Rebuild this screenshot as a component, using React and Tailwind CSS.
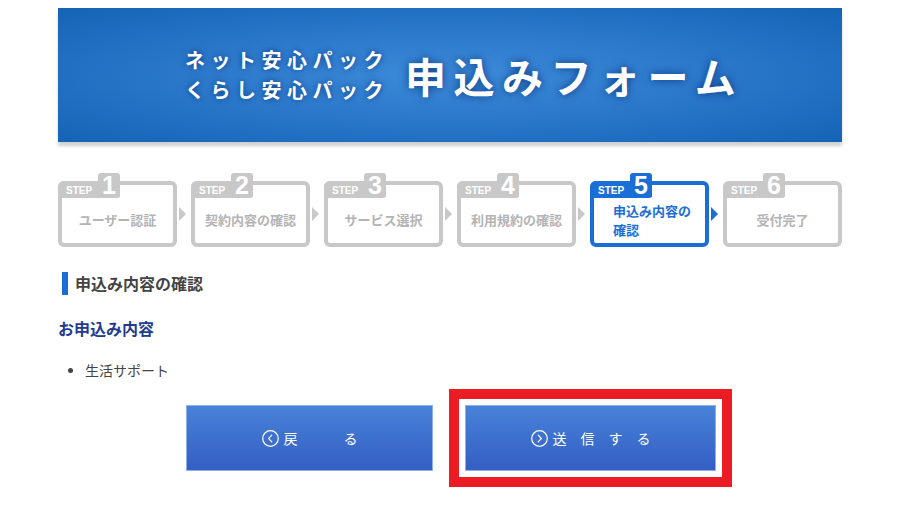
import React from "react";

const steps = [
  { no: "1", label: "ユーザー認証" },
  { no: "2", label: "契約内容の確認" },
  { no: "3", label: "サービス選択" },
  { no: "4", label: "利用規約の確認" },
  { no: "5", label: "申込み内容の確認", active: true },
  { no: "6", label: "受付完了" },
];

function Step({ no, label, active, last }) {
  const border = active ? "border-[#1a6fd6]" : "border-[#c8c8c8]";
  const fill = active ? "bg-[#1a6fd6]" : "bg-[#c8c8c8]";
  return (
    <div className="relative w-[119px] h-[66px] shrink-0">
      <div className={`absolute inset-0 rounded-[6px] border-[4px] bg-white ${border}`} />
      {/* tab */}
      <div className={`absolute left-0 top-0 h-[17px] w-[62px] rounded-tl-[6px] rounded-br-[3px] ${fill} flex items-end pl-[8px]`}>
        <span className="text-[10px] font-bold text-white leading-[15px] font-['Liberation_Sans',sans-serif]">STEP</span>
      </div>
      <div className={`absolute left-[40px] top-[-8px] h-[24px] w-[22px] rounded-t-[3px] ${fill} flex items-center justify-center`}>
        <span className="text-[25px] font-bold text-white leading-none font-['Liberation_Sans',sans-serif]">{no}</span>
      </div>
      {!last && (
        <div
          className={`absolute right-[-9px] top-[26px] w-0 h-0 border-y-[7px] border-y-transparent border-l-[7px] ${
            active ? "border-l-[#1a6fd6]" : "border-l-[#c8c8c8]"
          }`}
        />
      )}
      <div className="absolute left-0 right-0 top-[17px] bottom-[6px] flex items-center">
        {active ? (
          <p className="pl-[23px] pr-[8px] text-[13px] font-bold text-[#1a6fd6] leading-[19px]">
            申込み内容の
            <br />
            確認
          </p>
        ) : (
          <p className="w-full text-center text-[13px] font-bold text-[#b4b4b4] leading-[17px]">
            {label}
          </p>
        )}
      </div>
    </div>
  );
}

function CircleChevron({ dir }) {
  return (
    <svg width="17" height="17" viewBox="0 0 17 17" fill="none" stroke="white" strokeWidth="1.2">
      <circle cx="8.5" cy="8.5" r="7.8" />
      {dir === "left" ? (
        <path d="M9.8 5.2 L6.6 8.5 L9.8 11.8" strokeLinecap="round" strokeLinejoin="round" />
      ) : (
        <path d="M7.2 5.2 L10.4 8.5 L7.2 11.8" strokeLinecap="round" strokeLinejoin="round" />
      )}
    </svg>
  );
}

export default function App() {
  return (
    <div className="min-h-screen bg-white font-['Noto_Sans_CJK_JP','Noto_Sans',sans-serif]">
      <div className="mx-auto w-[784px] pt-[8px] pb-[36px]">
        {/* banner */}
        <div className="h-[134px] bg-[#1464b6] bg-[radial-gradient(ellipse_at_center,#3c8ad9_0%,#2c79cc_45%,#1463b5_100%)] shadow-[0_4px_3px_rgba(0,0,0,0.18)] flex items-center pl-[127px]">
          <div className="text-white font-bold text-[20px] leading-[30px] tracking-[5.5px] [text-shadow:0_0_6px_rgba(0,40,110,0.8)]">
            <div>ネット安心パック</div>
            <div>くらし安心パック</div>
          </div>
          <div className="ml-[16px] text-white font-bold text-[41px] leading-none tracking-[7.5px] [text-shadow:0_0_8px_rgba(0,40,110,0.8)]">
            申込みフォーム
          </div>
        </div>

        {/* steps */}
        <div className="mt-[39px] flex gap-[14px]">
          {steps.map((s, i) => (
            <Step key={s.no} {...s} last={i === steps.length - 1} />
          ))}
        </div>

        {/* heading */}
        <div className="mt-[25px] flex items-center pl-[4px]">
          <div className="w-[6px] h-[23px] bg-[#1a6fd6]" />
          <h2 className="ml-[7px] text-[16px] font-bold text-[#444] leading-[23px]">申込み内容の確認</h2>
        </div>

        <h3 className="mt-[21px] text-[16px] font-bold text-[#1f3c8e] leading-[24px]">お申込み内容</h3>

        <ul className="mt-[20px] pl-[10px]">
          <li className="flex items-center text-[14px] text-[#444] leading-[20px]">
            <span className="w-[5px] h-[5px] rounded-full bg-[#444]" />
            <span className="ml-[12px]">生活サポート</span>
          </li>
        </ul>

        {/* buttons */}
        <div className="mt-[9px] flex items-center pl-[128px] gap-[16px]">
          <button className="w-[247px] h-[66px] border border-[#8fb0e6] bg-gradient-to-b from-[#4882d8] to-[#345ec4] text-white text-[14px] flex items-center justify-center">
            <CircleChevron dir="left" />
            <span className="ml-[5px]">戻</span>
            <span className="ml-[46px]">る</span>
          </button>
          <div className="border-[10px] border-[#ec1c24] p-[6px]">
            <button className="w-[251px] h-[66px] border border-[#8fb0e6] bg-gradient-to-b from-[#4882d8] to-[#345ec4] text-white text-[14px] flex items-center justify-center">
              <CircleChevron dir="right" />
              <span className="ml-[5px] tracking-[14px]">送信す</span>
              <span>る</span>
            </button>
          </div>
        </div>
      </div>
    </div>
  );
}
